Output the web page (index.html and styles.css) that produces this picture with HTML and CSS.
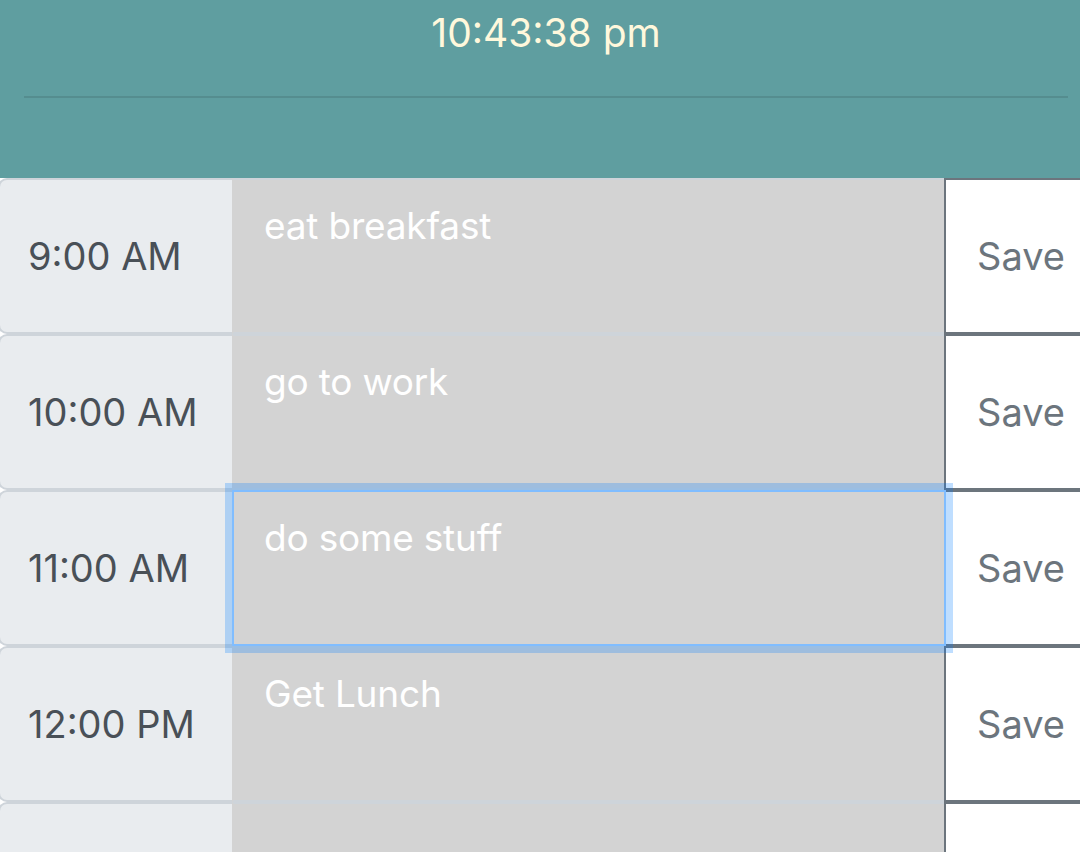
FILE: index.html
```html
<!DOCTYPE html>
<html lang="en">
<head>
<meta charset="utf-8">
<title>Work Day Scheduler</title>
<link rel="stylesheet" href="styles.css">
</head>
<body>
<div class="page">
  <header class="header">
    <p class="clock">10:43:38 pm</p>
    <div class="rule"></div>
  </header>
  <main class="schedule">
    <div class="row">
      <div class="hour">9:00 AM</div>
      <textarea class="desc">eat breakfast</textarea>
      <button class="save">Save</button>
    </div>
    <div class="row">
      <div class="hour">10:00 AM</div>
      <textarea class="desc">go to work</textarea>
      <button class="save">Save</button>
    </div>
    <div class="row">
      <div class="hour">11:00 AM</div>
      <textarea class="desc focused">do some stuff</textarea>
      <button class="save">Save</button>
    </div>
    <div class="row">
      <div class="hour">12:00 PM</div>
      <textarea class="desc">Get Lunch</textarea>
      <button class="save">Save</button>
    </div>
    <div class="row">
      <div class="hour" aria-label="1:00 PM"></div>
      <textarea class="desc"></textarea>
      <button class="save" aria-label="Save"></button>
    </div>
  </main>
</div>
</body>
</html>
```
FILE: styles.css
```css
html, body {
  margin: 0;
  padding: 0;
  width: 1080px;
  height: 852px;
  overflow: hidden;
  background: #ffffff;
  font-family: Inter, "Noto Sans", "Liberation Sans", sans-serif;
}

.page {
  width: 1092px;
}

.header {
  box-sizing: border-box;
  height: 178px;
  padding: 9px 24px 0;
  background: #5f9ea0;
}

.clock {
  margin: 0;
  text-align: center;
  color: #fff8dc;
  font-size: 39px;
  line-height: 47px;
}

.rule {
  height: 2px;
  margin-top: 40px;
  background: rgba(0, 0, 0, 0.1);
}

.row {
  display: flex;
  height: 156px;
}

.hour {
  box-sizing: border-box;
  flex: 0 0 234px;
  display: flex;
  align-items: center;
  margin-left: -2px;
  padding-left: 28px;
  border: 2px solid #ced4da;
  border-right-width: 0;
  border-radius: 9px 0 0 9px;
  background: #e9ecef;
  color: #495057;
  font-size: 38px;
}

.desc {
  box-sizing: border-box;
  flex: 0 0 714px;
  height: 156px;
  margin: 0;
  padding: 18px 30px 16px;
  border: 2px solid #ced4da;
  border-left-color: #d3d3d3;
  background: #d3d3d3;
  color: #ffffff;
  font-family: Inter, "Noto Sans", "Liberation Sans", sans-serif;
  font-size: 37px;
  line-height: 1.5;
  letter-spacing: -0.2px;
  resize: none;
  outline: none;
  overflow: hidden;
}

.desc.focused {
  position: relative;
  z-index: 3;
  border-color: #80bdff;
  box-shadow: 0 0 0 7px rgba(0, 123, 255, 0.25);
}

.save {
  position: relative;
  z-index: 2;
  box-sizing: border-box;
  flex: 0 0 154px;
  margin-left: -2px;
  padding: 0;
  border: 2px solid #6c757d;
  background: #ffffff;
  color: #6c757d;
  font-family: Inter, "Noto Sans", "Liberation Sans", sans-serif;
  font-size: 38px;
}
```
